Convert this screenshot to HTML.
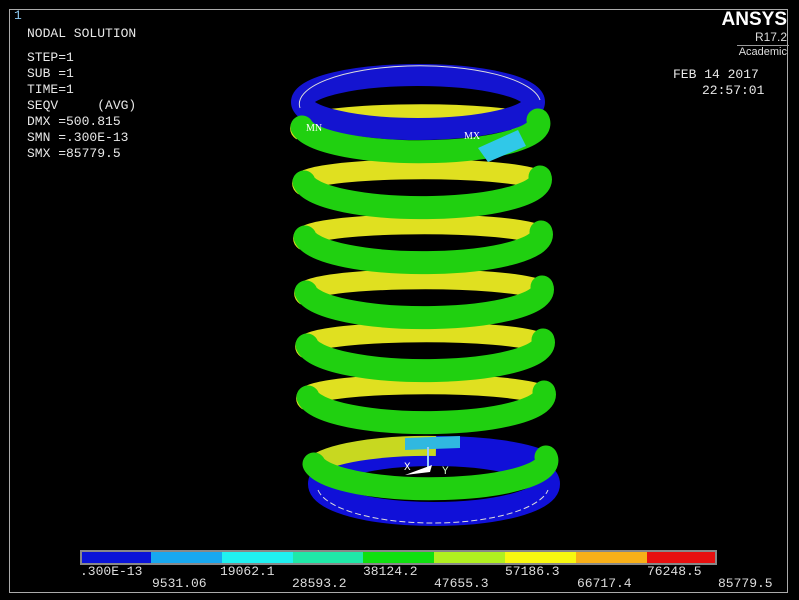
<!DOCTYPE html>
<html><head><meta charset="utf-8"><style>
html,body{margin:0;padding:0;background:#000;}
#c{position:relative;width:799px;height:600px;background:#000;overflow:hidden;font-family:"Liberation Mono",monospace;color:#e8e8e8;}
.t{position:absolute;font-size:13px;line-height:16px;white-space:pre;}
.frame{position:absolute;left:9px;top:9px;width:779px;height:584px;border:1px solid #aaa;box-sizing:border-box;}
.sans{font-family:"Liberation Sans",sans-serif;}
.lab{position:absolute;font-size:13px;white-space:pre;color:#ddd;}
</style></head><body><div id="c">
<div class="frame"></div>
<div class="t" style="left:14px;top:8px;color:#8cc8f0;">1</div>
<div class="t" style="left:27px;top:26px;">NODAL SOLUTION</div>
<div class="t" style="left:27px;top:50px;">STEP=1
SUB =1
TIME=1
SEQV     (AVG)
DMX =500.815
SMN =.300E-13
SMX =85779.5</div>
<div class="sans" style="position:absolute;right:12px;top:9px;font-size:19px;font-weight:bold;color:#fff;">ANSYS</div>
<div class="sans" style="position:absolute;right:12px;top:30px;font-size:12px;color:#ddd;">R17.2</div>
<div style="position:absolute;left:737px;top:45px;width:52px;border-top:1px solid #999;"></div>
<div class="sans" style="position:absolute;right:12px;top:46px;font-size:11px;color:#ddd;">Academic</div>
<div class="t" style="left:673px;top:67px;">FEB 14 2017</div>
<div class="t" style="left:702px;top:83px;">22:57:01</div>

<svg width="799" height="600" style="position:absolute;left:0;top:0">
<!-- bottom blue ring -->
<ellipse cx="434" cy="484" rx="114" ry="30" fill="none" stroke="#1010d8" stroke-width="24"/>
<path d="M318 490 A116 38 0 0 0 548 490" fill="none" stroke="#ddd" stroke-width="1" stroke-dasharray="6 3"/>
<!-- yellow back arcs -->
<g fill="none" stroke="#e0e020" stroke-width="20">
<path d="M538 126 A118 14 0 0 0 302 131"/>
<path d="M540 181 A118 14 0 0 0 304 186"/>
<path d="M541 236 A118 14 0 0 0 305 241"/>
<path d="M542 291 A118 14 0 0 0 306 296"/>
<path d="M543 344 A118 14 0 0 0 307 349"/>
<path d="M544 396 A118 14 0 0 0 308 401"/>
</g>
<path d="M436 446 A116 26 0 0 1 546 462" fill="none" stroke="#1010d8" stroke-width="20"/>
<path d="M436 446 A116 26 0 0 0 314 466" fill="none" stroke="#c8d820" stroke-width="20"/>
<!-- top blue ring -->
<ellipse cx="418" cy="102" rx="116" ry="27" fill="none" stroke="#1414d0" stroke-width="22"/>
<path d="M300 108 A120 38 0 0 1 540 100" fill="none" stroke="#ddd" stroke-width="1"/>
<!-- green fronts -->
<g fill="none" stroke="#20d010" stroke-width="23" stroke-linecap="round">
<path d="M302 127 A118 28 0 0 0 538 120"/>
<path d="M304 182 A118 28 0 0 0 540 177"/>
<path d="M305 237 A118 28 0 0 0 541 232"/>
<path d="M306 292 A118 28 0 0 0 542 287"/>
<path d="M307 345 A118 28 0 0 0 543 340"/>
<path d="M308 397 A118 28 0 0 0 544 392"/>
<path d="M314 464 A116 28 0 0 0 546 457"/>
</g>
<path d="M478 148 L518 130 L526 146 L488 162Z" fill="#30c8e8"/>
<path d="M405 438 L460 436 L460 448 L405 450Z" fill="#30b8e0"/>
<line x1="428" y1="447" x2="428" y2="470" stroke="#9cf" stroke-width="2"/>
<path d="M405 475 L432 465 L430 472Z" fill="#fff"/>
<text x="404" y="470" fill="#fff" font-size="11" font-family="Liberation Mono">X</text>
<text x="442" y="474" fill="#cfc" font-size="11" font-family="Liberation Mono">Y</text>
<text x="306" y="131" fill="#fff" font-size="10" font-family="Liberation Serif">MN</text>
<text x="464" y="139" fill="#fff" font-size="10" font-family="Liberation Serif">MX</text>
<!-- legend -->
<rect x="80" y="550" width="637" height="15" fill="#888"/>
<rect x="82" y="552" width="69" height="11" fill="#0a14d8"/>
<rect x="151" y="552" width="71" height="11" fill="#18a8f0"/>
<rect x="222" y="552" width="71" height="11" fill="#20f0f0"/>
<rect x="293" y="552" width="70" height="11" fill="#20e8a8"/>
<rect x="363" y="552" width="71" height="11" fill="#10e010"/>
<rect x="434" y="552" width="71" height="11" fill="#b0f020"/>
<rect x="505" y="552" width="71" height="11" fill="#f8f810"/>
<rect x="576" y="552" width="71" height="11" fill="#f8b018"/>
<rect x="647" y="552" width="68" height="11" fill="#e81010"/>
</svg>
<div class="lab" style="left:80px;top:564px;">.300E-13</div>
<div class="lab" style="left:220px;top:564px;">19062.1</div>
<div class="lab" style="left:363px;top:564px;">38124.2</div>
<div class="lab" style="left:505px;top:564px;">57186.3</div>
<div class="lab" style="left:647px;top:564px;">76248.5</div>
<div class="lab" style="left:152px;top:576px;">9531.06</div>
<div class="lab" style="left:292px;top:576px;">28593.2</div>
<div class="lab" style="left:434px;top:576px;">47655.3</div>
<div class="lab" style="left:577px;top:576px;">66717.4</div>
<div class="lab" style="left:718px;top:576px;">85779.5</div>
</div></body></html>
